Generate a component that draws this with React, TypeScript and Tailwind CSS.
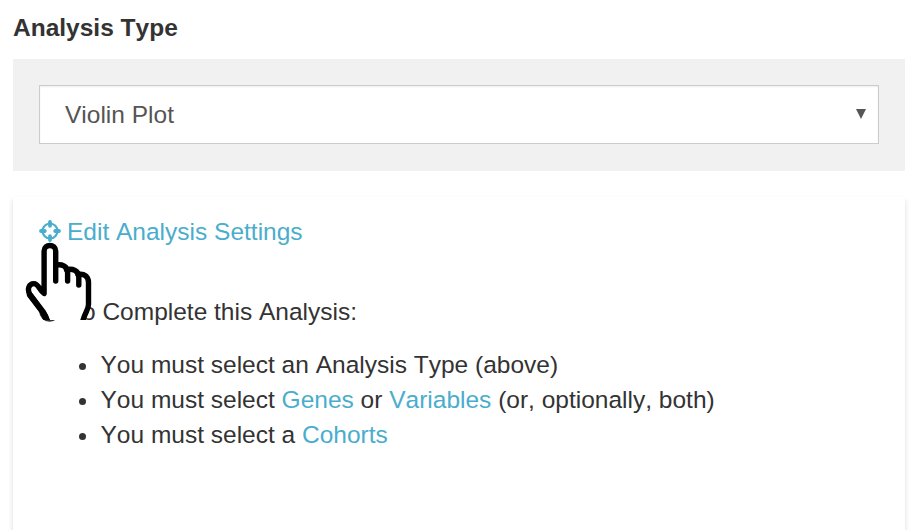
import React from "react";

function CrosshairIcon() {
  return (
    <svg className="mb-[1px] block h-[22px] w-[22px] shrink-0" viewBox="0 0 22 22" fill="none" stroke="#4aadcd" strokeLinecap="round">
      <circle cx="11" cy="11" r="7.5" strokeWidth="2.2" />
      <path d="M11 2v3.8M11 16.2v3.8M2 11h3.8M16.2 11h3.8" strokeWidth="3.8" />
    </svg>
  );
}

function InfoIcon() {
  return (
    <svg className="block h-[21px] w-[21px] shrink-0" viewBox="0 0 21 21">
      <circle cx="10.5" cy="10.5" r="10.3" fill="#333" />
      <path d="M9 4h3v3H9zM8 9h4v6h2v2H8v-2h1v-4H8z" fill="#fff" />
    </svg>
  );
}

function HandPointer() {
  return (
    <svg className="pointer-events-none absolute left-[20px] top-[240px] h-[80px] w-[80px] overflow-hidden" viewBox="20 240 80 80">
      <path
        d="M48 322L45 317L30 294C27 288 29 283 35 283.5C39 283.5 41 289 44.3 293V251C44.3 243.5 55.7 243.5 55.7 251V265C62 264 67.5 265 67.5 271C72 268.5 78.7 270 78.7 276C84 273 88.6 276 88.6 281V306C88 311 84 312 82 322Z"
        fill="#fff"
      />
      <g fill="none" stroke="#000" strokeWidth="5.4" strokeLinecap="round" strokeLinejoin="round">
        <path d="M48 323Q46.5 317 42.5 311.5L30 295C27 289.5 28.5 283.6 34 283.6C38.5 283.6 39 289.5 44.1 293.5V251C44.1 243.6 55.7 243.6 55.7 251V281" />
        <path d="M55.7 265.2C61.5 263.7 67.6 266 67.6 272.5V281" />
        <path d="M66.5 269.8C72.5 268.2 78.8 270.8 78.8 277V285" />
        <path d="M78 274.6C84.5 273.2 88.5 277 88.5 282.5V304.5C88.5 310.5 84.5 312.5 82.3 323" />
        <path d="M30 295L42.5 311.5Q46 317 47.5 323" strokeWidth="6.2" />
      </g>
    </svg>
  );
}

export default function App() {
  return (
    <main
      className="relative h-[530px] w-[919px] overflow-hidden bg-white pl-[13px] pr-[14px] text-[24.5px] leading-[35px] text-[#333] [font-kerning:none]"
      style={{ fontFamily: '"Liberation Sans", Arial, sans-serif' }}
    >
      <h1 className="pt-[10px] font-bold">Analysis Type</h1>
      <section className="mt-[14px] h-[112px] bg-[#f1f1f1] p-[26px]">
        <button className="flex h-[59px] w-full items-center justify-between border border-[#ccc] bg-white pl-[25px] pr-[12px] text-left text-[#555] shadow-[inset_0_1px_2px_rgba(0,0,0,0.07)]">
          <span>Violin Plot</span>
          <svg className="mb-[1px] h-[10px] w-[10px]" viewBox="0 0 10 10">
            <path d="M0 0h10L5 10z" fill="#555" />
          </svg>
        </button>
      </section>
      <section className="mt-[26px] h-[360px] bg-white px-[26px] pt-[17px] shadow-[0_3px_5px_rgba(0,0,0,0.14)]">
        <a className="flex h-[35px] items-center gap-[6px] text-[#4aadcd]">
          <CrosshairIcon />
          <span>Edit Analysis Settings</span>
        </a>
        <p className="mt-[45px] flex items-center gap-[7px]">
          <InfoIcon />
          <span>To Complete this Analysis:</span>
        </p>
        <ul className="mt-[18px] pl-[62px]">
          {[
            <>You must select an Analysis Type (above)</>,
            <>You must select <a className="text-[#4aadcd]">Genes</a> or <a className="text-[#4aadcd]">Variables</a> (or, optionally, both)</>,
            <>You must select a <a className="text-[#4aadcd]">Cohorts</a></>,
          ].map((item, i) => (
            <li key={i} className="-ml-[22px] flex items-center">
              <span className="mr-[14.5px] mt-[4px] h-[7px] w-[7px] shrink-0 rounded-full bg-[#333]" />
              <span>{item}</span>
            </li>
          ))}
        </ul>
      </section>
      <HandPointer />
    </main>
  );
}
